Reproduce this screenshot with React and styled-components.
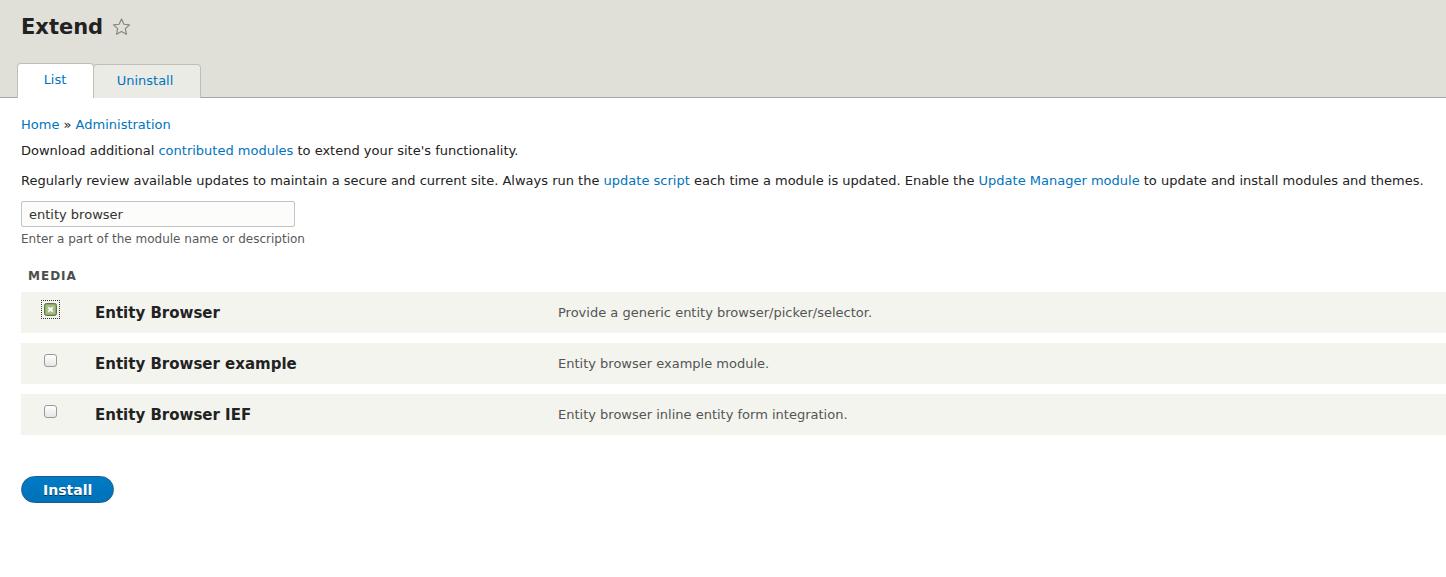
import styled, { createGlobalStyle } from "styled-components";

const GlobalStyle = createGlobalStyle`
  body {
    margin: 0;
    background: #fff;
    color: #222;
    font-family: "DejaVu Sans", "Liberation Sans", sans-serif;
    font-size: 13px;
  }
`;

const Header = styled.header`
  background: #e0e0d8;
  border-bottom: 1px solid #a6a6a6;
  padding: 15px 0 0 21px;
`;

const TitleRow = styled.div`
  display: flex;
  align-items: center;
  gap: 8px;
`;

const Title = styled.h1`
  margin: 0;
  font-size: 21px;
  line-height: 24px;
  font-weight: bold;
  color: #222;
`;

const TabRow = styled.ul`
  display: flex;
  align-items: flex-end;
  list-style: none;
  margin: 24px 0 -1px -4px;
  padding: 0;
`;

const Tab = styled.li`
  box-sizing: border-box;
  width: ${(p) => p.$width}px;
  height: ${(p) => (p.$active ? 35 : 34)}px;
  margin-left: ${(p) => (p.$first ? 0 : -1)}px;
  display: flex;
  align-items: center;
  justify-content: center;
  padding: 0 ${(p) => p.$shift}px ${(p) => (p.$active ? 3 : 2)}px 0;
  border: 1px solid #bfbfba;
  border-bottom: none;
  border-radius: 4px 4px 0 0;
  background: ${(p) => (p.$active ? "#fff" : "#ebebe5")};
  color: #0074bd;
  font-size: 13px;
`;

const Content = styled.main`
  padding: 18px 0 40px 21px;
`;

const Link = styled.a`
  color: #0074bd;
  text-decoration: none;
`;

const Text = styled.p`
  margin: ${(p) => p.$top}px 0 0;
  line-height: 18px;
  font-size: 13px;
  color: #222;
`;

const Search = styled.input`
  box-sizing: border-box;
  display: block;
  margin-top: 11px;
  width: 274px;
  height: 26px;
  padding: 0 7px;
  border: 1px solid #c4c4c4;
  border-radius: 2px;
  font-family: inherit;
  font-size: 13px;
  color: #333;
  background: #fcfcfa;
`;

const Hint = styled.div`
  margin-top: 4px;
  font-size: 12px;
  line-height: 16px;
  color: #595959;
`;

const Group = styled.h2`
  margin: 21px 0 8px;
  padding-left: 7px;
  font-size: 12px;
  line-height: 16px;
  letter-spacing: 1px;
  text-transform: uppercase;
  font-weight: bold;
  color: #4d4d4d;
`;

const Rows = styled.div`
  display: flex;
  flex-direction: column;
  gap: 10px;
`;

const Row = styled.div`
  display: grid;
  grid-template-columns: 74px 463px 1fr;
  align-items: center;
  height: 41px;
  background: #f3f4ee;
`;

const CheckCell = styled.div`
  display: flex;
  padding-left: 23px;
  padding-bottom: 7px;
`;

const Box = styled.span`
  box-sizing: border-box;
  width: 13px;
  height: 13px;
  border: 1px solid #999;
  border-radius: 3px;
  background: linear-gradient(#fff, #e6e6e6);
`;

const Focus = styled.span`
  display: flex;
  padding: 2px;
  margin: -3px 0 -3px -2px;
  outline: 1px dotted #333;
`;

const Name = styled.div`
  font-size: 15px;
  font-weight: bold;
  color: #222;
`;

const Description = styled.div`
  font-size: 13px;
  color: #555;
`;

const InstallButton = styled.button`
  margin-top: 41px;
  height: 27px;
  padding: 0 21px;
  border: 1px solid #1e5c90;
  border-radius: 20px;
  background: linear-gradient(#007bc6, #0071b8);
  color: #fff;
  font-family: inherit;
  font-size: 14px;
  font-weight: bold;
  text-shadow: 0 1px rgba(0, 0, 0, 0.5);
  cursor: pointer;
`;

const Star = () => (
  <svg width="21" height="20" viewBox="0 0 24 24">
    <path
      d="M12 2.5l2.9 6.2 6.7.7-5 4.6 1.4 6.7L12 17.3l-6 3.4 1.4-6.7-5-4.6 6.7-.7z"
      fill="none"
      stroke="#85857c"
      strokeWidth="1.4"
      strokeLinejoin="round"
    />
  </svg>
);

const CheckedBox = () => (
  <Focus>
    <svg width="13" height="13" viewBox="0 0 13 13">
      <rect x="0.5" y="0.5" width="12" height="12" rx="2" fill="#8fa86c" stroke="#5a7740" />
      <rect x="2" y="2" width="9" height="9" rx="1" fill="#a7bd88" />
      <path d="M4.3 4.3l4.4 4.4M8.7 4.3l-4.4 4.4" stroke="#fff" strokeWidth="1.8" />
    </svg>
  </Focus>
);

const modules = [
  { name: "Entity Browser", desc: "Provide a generic entity browser/picker/selector.", checked: true },
  { name: "Entity Browser example", desc: "Entity browser example module." },
  { name: "Entity Browser IEF", desc: "Entity browser inline entity form integration." },
];

export default function App() {
  return (
    <>
      <GlobalStyle />
      <Header>
        <TitleRow>
          <Title>Extend</Title>
          <Star />
        </TitleRow>
        <TabRow>
          <Tab $active $first $width={77} $shift={1}>List</Tab>
          <Tab $width={108} $shift={4}>Uninstall</Tab>
        </TabRow>
      </Header>
      <Content>
        <Text $top={0}>
          <Link href="#">Home</Link> » <Link href="#">Administration</Link>
        </Text>
        <Text $top={8}>
          Download additional <Link href="#">contributed modules</Link> to extend your site's functionality.
        </Text>
        <Text $top={12}>
          Regularly review available updates to maintain a secure and current site. Always run the{" "}
          <Link href="#">update script</Link> each time a module is updated. Enable the{" "}
          <Link href="#">Update Manager module</Link> to update and install modules and themes.
        </Text>
        <Search defaultValue="entity browser" />
        <Hint>Enter a part of the module name or description</Hint>
        <Group>Media</Group>
        <Rows>
          {modules.map((m) => (
            <Row key={m.name}>
              <CheckCell>{m.checked ? <CheckedBox /> : <Box />}</CheckCell>
              <Name>{m.name}</Name>
              <Description>{m.desc}</Description>
            </Row>
          ))}
        </Rows>
        <InstallButton>Install</InstallButton>
      </Content>
    </>
  );
}
